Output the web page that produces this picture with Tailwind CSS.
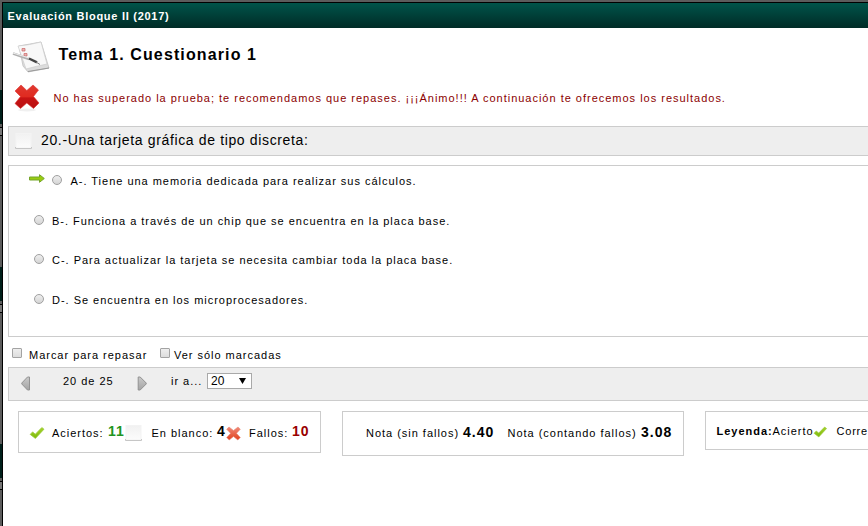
<!DOCTYPE html>
<html lang="es">
<head>
<meta charset="utf-8">
<title>Evaluación Bloque II (2017)</title>
<script src="https://cdn.jsdelivr.net/npm/@tailwindcss/browser@4"></script>
</head>
<body class="w-[868px] h-[526px] overflow-hidden bg-[#5c5c5c] text-black font-['Liberation_Sans',Arial,sans-serif] text-[11px] leading-[14px] tracking-[0.98px] whitespace-nowrap">
<svg class="absolute size-0">
  <defs>
    <linearGradient id="g-check" x1="0" y1="0" x2="0" y2="1"><stop offset="0" stop-color="#a6d22c"/><stop offset="1" stop-color="#7cb909"/></linearGradient>
    <linearGradient id="g-x" x1="0" y1="0" x2="0" y2="1"><stop offset="0" stop-color="#e03a30"/><stop offset=".5" stop-color="#e02a20"/><stop offset=".55" stop-color="#c81414"/><stop offset="1" stop-color="#b80f10"/></linearGradient>
    <linearGradient id="g-x2" x1="0" y1="0" x2="0" y2="1"><stop offset="0" stop-color="#f08a78"/><stop offset="1" stop-color="#e0401c"/></linearGradient>
    <linearGradient id="g-blank" x1="0" y1="0" x2="0" y2="1"><stop offset="0" stop-color="#f1f1f1"/><stop offset="1" stop-color="#fcfcfc"/></linearGradient>
    <linearGradient id="g-btn" x1="0" y1="0" x2="0" y2="1"><stop offset="0" stop-color="#c9c9c9"/><stop offset="1" stop-color="#a4a4a4"/></linearGradient>
    <symbol id="check" viewBox="0 0 16 14"><path d="M1.2 8.4 3.6 5.9 6.3 8.2 12.8 1.6 15 3.2 6.4 12.4Z" fill="url(#g-check)" stroke="#9bcb3c" stroke-width=".8" stroke-linejoin="round"/></symbol>
    <symbol id="blank" viewBox="0 0 18 17"><rect x="1" y="0.5" width="15" height="14.5" fill="url(#g-blank)" stroke="#f3f3f3"/><path d="M.5 14V15.5H16.5V14" fill="none" stroke="#c6c6c6"/></symbol>
  </defs>
</svg>
<div class="flex h-[526px] pt-[2px]">
  <aside class="w-[2px] shrink-0 pt-[88px]">
    <div class="h-[34px] bg-[#001f1a]"></div><div class="mt-[3px] h-[9px] border-y border-black bg-[#777]"></div>
    <div class="mt-[131px] h-[34px] bg-[#001f1a]"></div><div class="mt-[3px] h-[9px] border-y border-black bg-[#777]"></div>
    <div class="mt-[131px] h-[34px] bg-[#001f1a]"></div><div class="mt-[3px] h-[9px] border-y border-black bg-[#777]"></div>
  </aside>
  <main class="w-[866px] shrink-0 border-l border-t border-black bg-white">
    <header class="h-[25px] bg-linear-to-b from-[#00544a] to-[#002c27] pl-[4.5px] pt-[6px] font-bold text-white tracking-[0.72px]">Evaluación Bloque II (2017)</header>
    <div class="flex h-[52px] pl-[9px] pt-[12px]">
      <svg class="w-[38px] h-[34px]" viewBox="0 0 38 34">
        <path d="M7 6 29 2 37 28 16 32 11 26Z" fill="#dcdcdc" stroke="#bbb" stroke-width=".7"/>
        <path d="M6 6Q18 5 29 2L35 24Q25 26 14 29Z" fill="#f8f8f8" stroke="#ccc" stroke-width=".7"/>
        <path d="M16 31.5 37 28" stroke="#999" stroke-width="1"/>
        <path d="M10 8.5h3v2.5h-3zM12 13.5h3v2.5h-3z" fill="#e9b5b5" stroke="#c66" stroke-width=".7"/>
        <path d="M1 13.5 17 19" stroke="#b0b0b0" stroke-width="2.4" fill="none"/>
        <path d="M1 13 17 18" stroke="#eee" stroke-width="1" fill="none"/>
        <path d="M17 18.5 25 22.3" stroke="#444" stroke-width="2.4" fill="none"/>
        <path d="M24 22 28 24.5" stroke="#777" stroke-width="1" fill="none"/>
      </svg>
      <h1 class="ml-[8.5px] mt-[5px] text-[16px] leading-[20px] font-bold tracking-[1.12px]">Tema 1. Cuestionario 1</h1>
    </div>
    <div class="flex h-[46px] pl-[11px] pt-[3px]">
      <svg class="w-[27px] h-[30px]" viewBox="0 0 27 30"><ellipse cx="13" cy="27" rx="9" ry="1.5" fill="#f0f0f0"/><path d="M7 2 12.8 7.5 19 2 24.5 7 19.5 13.5 25 20 19.5 25.5 12.8 20 6.5 25.5 1 20.5 6.5 13.5 1 8Z" fill="url(#g-x)" stroke="#d33" stroke-width=".6"/></svg>
      <p class="ml-[12.5px] mt-[8px] text-[#8b0000] tracking-[0.99px]">No has superado la prueba; te recomendamos que repases. ¡¡¡Ánimo!!! A continuación te ofrecemos los resultados.</p>
    </div>
    <section class="ml-[5px] flex h-[30px] border border-r-0 border-[#ccc] bg-[#eee] pl-[6px]">
      <svg class="mt-[6px] w-[18px] h-[17px]"><use href="#blank"/></svg>
      <h2 class="ml-[8px] mt-[4px] text-[14px] leading-[18px] tracking-[0.64px]">20.-Una tarjeta gráfica de tipo discreta:</h2>
    </section>
    <section class="ml-[5px] mt-[9px] h-[172px] border border-r-0 border-[#ccc]">
      <div class="flex h-[40px] pl-[20px] pt-[8px]">
        <svg class="w-[16px] h-[9px]" viewBox="0 0 16 9"><path d="M.5 3H10.5V.7L15.3 4.5 10.5 8.3V6H.5Z" fill="#99cc11" stroke="#75a52a"/></svg>
        <i class="ml-[7px] mt-px size-[10px] rounded-full border border-[#a0a0a0] bg-linear-to-b from-[#eee] to-[#d5d5d5]"></i>
        <span class="ml-[8.5px]">A-. Tiene una memoria dedicada para realizar sus cálculos.</span>
      </div>
      <div class="flex h-[39px] pl-[25px] pt-[8px]"><i class="mt-px size-[10px] rounded-full border border-[#a0a0a0] bg-linear-to-b from-[#eee] to-[#d5d5d5]"></i><span class="ml-[8px]">B-. Funciona a través de un chip que se encuentra en la placa base.</span></div>
      <div class="flex h-[40px] pl-[25px] pt-[8px]"><i class="mt-px size-[10px] rounded-full border border-[#a0a0a0] bg-linear-to-b from-[#eee] to-[#d5d5d5]"></i><span class="ml-[8px]">C-. Para actualizar la tarjeta se necesita cambiar toda la placa base.</span></div>
      <div class="flex h-[40px] pl-[25px] pt-[8px]"><i class="mt-px size-[10px] rounded-full border border-[#a0a0a0] bg-linear-to-b from-[#eee] to-[#d5d5d5]"></i><span class="ml-[8px]">D-. Se encuentra en los microprocesadores.</span></div>
    </section>
    <div class="flex h-[30px] pl-[9px] pt-[11px]">
      <i class="size-[10px] rounded-[1px] border border-[#a3a3a3] bg-linear-to-b from-[#eee] to-[#ddd]"></i>
      <span class="ml-[7px] w-[131px]">Marcar para repasar</span>
      <i class="size-[10px] rounded-[1px] border border-[#a3a3a3] bg-linear-to-b from-[#eee] to-[#ddd]"></i>
      <span class="ml-[4px]">Ver sólo marcadas</span>
    </div>
    <nav class="ml-[5px] flex h-[34px] border border-r-0 border-[#ccc] bg-[#eee] pl-[12px]">
      <svg class="mt-[8px] w-[10px] h-[15px]" viewBox="0 0 10 15"><path d="M8.5 1V14H6.5L.8 8V7L6.5 1Z" fill="url(#g-btn)" stroke="#929292"/></svg>
      <span class="ml-[32px] mt-[6px] w-[74px]">20 de 25</span>
      <svg class="mt-[8px] w-[10px] h-[15px]" viewBox="0 0 10 15"><path d="M1.2 1V14H3.2L9.2 8V7L3.2 1Z" fill="url(#g-btn)" stroke="#929292"/></svg>
      <span class="ml-[24px] mt-[6px] w-[36px]">ir a...</span>
      <div class="mt-[5px] flex h-[16px] w-[45px] items-center justify-between border border-[#a9a9a9] bg-white pl-[3px] pr-[5px] text-[12px] tracking-normal"><span>20</span><svg class="h-[6px] w-[7px]" viewBox="0 0 7 6"><path d="M0 0H7L3.5 6Z"/></svg></div>
    </nav>
    <footer class="ml-[15px] mt-[10px] flex items-start">
      <div class="flex h-[42px] w-[303px] shrink-0 border border-[#ccc] pl-[10px] pt-[12px]">
        <svg class="mt-[2px] w-[16px] h-[14px]"><use href="#check"/></svg>
        <span class="ml-[7px] w-[56px] mt-[2px]">Aciertos:</span>
        <b class="w-[17px] text-[14px]/[14px] text-[#219421]">11</b>
        <svg class="mt-px w-[18px] h-[17px]"><use href="#blank"/></svg>
        <span class="ml-[8.5px] w-[65.5px] mt-[2px]">En blanco:</span>
        <b class="w-[9px] text-[14px]/[14px]">4</b>
        <svg class="mt-[2px] w-[15px] h-[15px]" viewBox="0 0 15 15"><path d="M3 1 7.5 4.5 12 1 14.3 3.2 10.5 7.3 14.3 11.5 11.8 14 7.5 10.5 3.2 14 .7 11.5 4.6 7.3.7 3.2Z" fill="url(#g-x2)" stroke="#e88a78" stroke-width=".6"/></svg>
        <span class="ml-[8px] w-[43px] mt-[2px]">Fallos:</span>
        <b class="text-[14px]/[14px] text-[#990000]">10</b>
      </div>
      <div class="ml-[21px] flex h-[45px] w-[342px] shrink-0 border border-[#ccc] pl-[23px] pt-[13px]">
        <span class="w-[97px] mt-px">Nota (sin fallos)</span><b class="w-[44.5px] text-[14px]">4.40</b>
        <span class="w-[133.5px] mt-px">Nota (contando fallos)</span><b class="text-[14px]">3.08</b>
      </div>
      <div class="ml-[21px] flex h-[39px] w-[163px] shrink-0 overflow-hidden border border-r-0 border-[#ccc] pl-[10.5px] pt-[12px]">
        <b class="w-[56px]">Leyenda:</b><span class="w-[40.5px]">Acierto</span><svg class="mt-px w-[16px] h-[14px]"><use href="#check"/></svg><span class="ml-[9px] tracking-[0.8px]">Corre</span>
      </div>
    </footer>
  </main>
</div>
</body>
</html>
